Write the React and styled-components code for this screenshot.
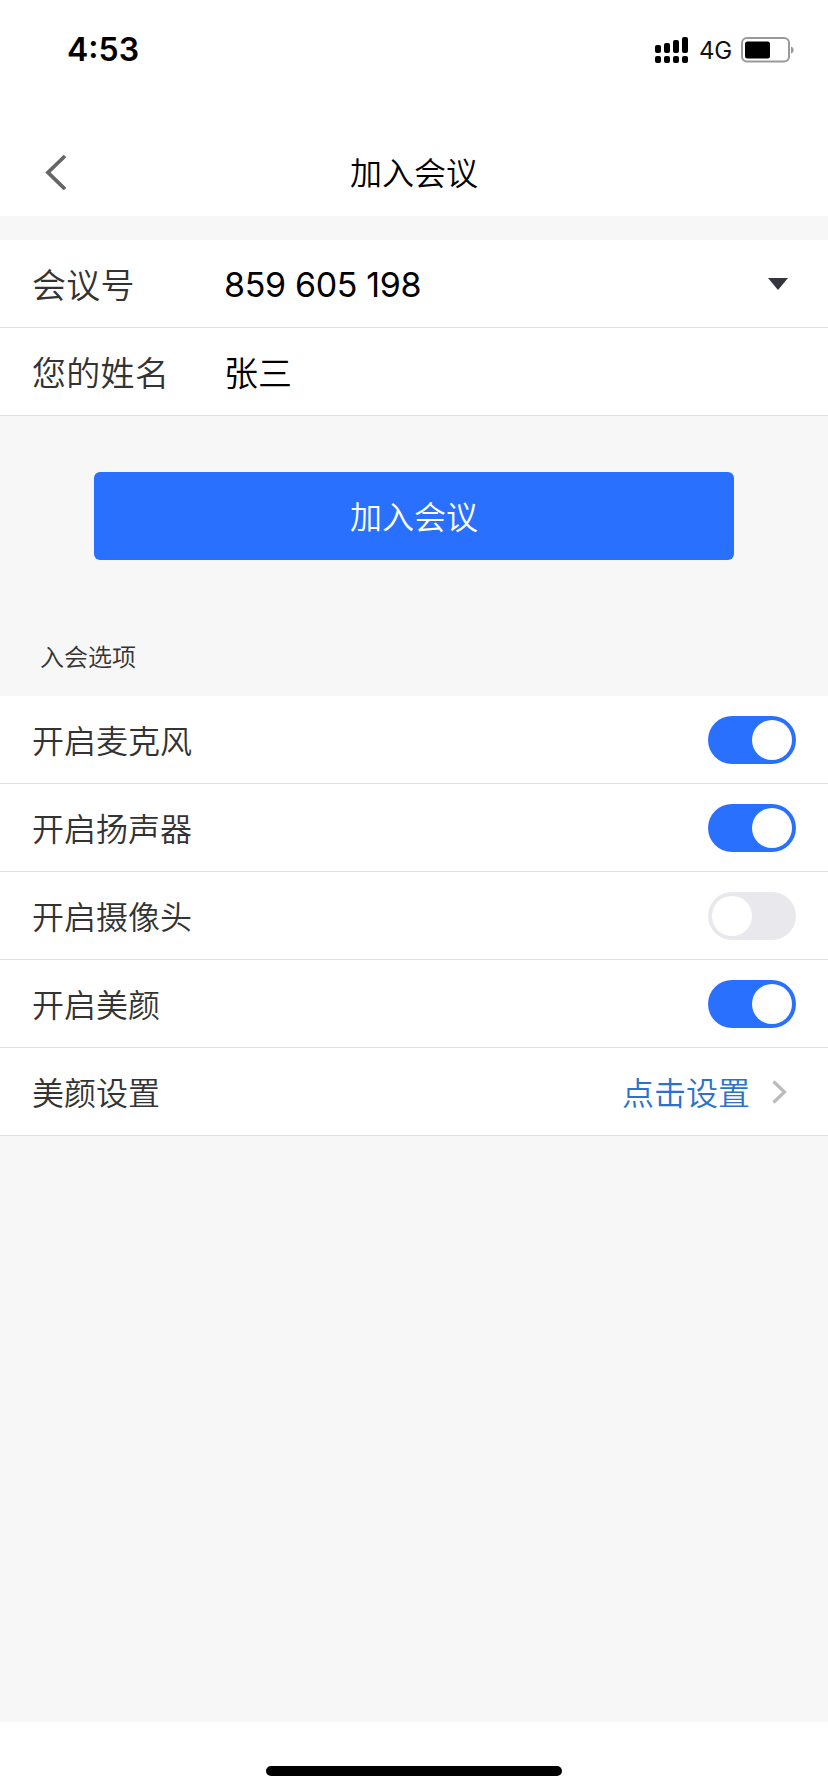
import React, { useState } from "react"
import styled, { createGlobalStyle } from "styled-components"

const GlobalStyle = createGlobalStyle`
  * {
    box-sizing: border-box;
  }
  body {
    margin: 0;
    background: #fff;
    font-family: Inter, "Noto Sans CJK SC", sans-serif;
  }
`;

const Screen = styled.div`
  width: 828px;
  height: 1792px;
  display: flex;
  flex-direction: column;
  background: #fff;
  overflow: hidden;
`;

const StatusBar = styled.header`
  height: 128px;
  padding: 30px 33px 0 67px;
  display: flex;
  align-items: flex-start;
  justify-content: space-between;
`;

const Time = styled.span`
  font-size: 32px;
  line-height: 40px;
  font-weight: 600;
  color: #000;
`;

const StatusIcons = styled.div`
  height: 40px;
  display: flex;
  align-items: center;
`;

const Network = styled.span`
  width: 43px;
  padding: 2px 0 0 10px;
  margin-right: 9px;
  font-size: 24px;
  line-height: 30px;
  letter-spacing: -0.3px;
  color: #111;
`;

const NavBar = styled.nav`
  height: 88px;
  padding: 0 44px;
  display: grid;
  grid-template-columns: 40px 1fr 40px;
  align-items: center;
`;

const BackButton = styled.button`
  height: 40px;
  padding: 0;
  border: 0;
  background: none;
  display: flex;
  align-items: center;
`;

const Title = styled.h1`
  margin: 0;
  padding-top: 3px;
  font-size: 32px;
  line-height: 48px;
  font-weight: 350;
  text-align: center;
  color: #000;
`;

const Content = styled.main`
  flex: 1;
  padding-top: 24px;
  background: #f7f7f7;
`;

const List = styled.div`
  background: #fff;
`;

const Row = styled.div`
  height: 88px;
  padding: 0 32px;
  display: flex;
  align-items: center;
  border-bottom: 1px solid #e0e0e0;
  font-size: ${props => (props.$large ? 34 : 32)}px;
  line-height: 48px;
  font-weight: 350;
  color: #333;
`;

const FieldLabel = styled.span`
  width: 192px;
  padding-top: 4px;
  letter-spacing: 0.3px;
`;

const FieldValue = styled.span`
  flex: 1;
  padding-top: ${props => (props.$numeric ? 2 : 4)}px;
  color: #000;
  font-weight: ${props => (props.$numeric ? 400 : 350)};
  letter-spacing: ${props => (props.$numeric ? "-0.35px" : "normal")};
`;

const OptionLabel = styled.span`
  flex: 1;
  padding-top: 4px;
`;

const Dropdown = styled.span`
  display: flex;
  padding-right: 8px;
`;

const JoinButton = styled.button`
  display: block;
  width: 640px;
  height: 88px;
  margin: 56px auto 0;
  padding: 3px 0 0;
  border: 0;
  border-radius: 6px;
  background: #2a70fe;
  color: #fff;
  font-family: inherit;
  font-size: 32px;
  font-weight: 350;
  line-height: 48px;
`;

const SectionTitle = styled.h2`
  height: 136px;
  margin: 0;
  padding: 80px 40px 0;
  font-size: 24px;
  line-height: 36px;
  font-weight: 350;
  color: #333;
`;

const Switch = styled.button`
  width: 88px;
  height: 48px;
  padding: 4px;
  border: 0;
  border-radius: 24px;
  display: flex;
  justify-content: ${props => (props.$on ? "flex-end" : "flex-start")};
  background: ${props => (props.$on ? "#2a70fe" : "#e9e9ed")};
`;

const Knob = styled.span`
  width: 40px;
  height: 40px;
  border-radius: 50%;
  background: #fff;
`;

const SettingLink = styled.span`
  display: flex;
  align-items: center;
  gap: 22px;
  padding-right: 9px;
  color: #2d72c9;
`;

const SettingText = styled.span`
  padding-top: 4px;
`;

const HomeArea = styled.footer`
  height: 70px;
  padding-top: 44px;
`;

const HomeIndicator = styled.div`
  width: 296px;
  height: 10px;
  margin: 0 auto;
  border-radius: 5px;
  background: #000;
`;

const SignalIcon = () => (
  <svg width="34" height="28" viewBox="0 0 34 28">
    <rect x="0" y="9" width="6" height="8" rx="2" />
    <rect x="9" y="7" width="6" height="10" rx="2" />
    <rect x="18" y="4" width="6" height="13" rx="2" />
    <rect x="27" y="1" width="6" height="16" rx="2" />
    {[0, 9, 18, 27].map(x => (
      <rect key={x} x={x} y="20" width="6" height="7" rx="2" />
    ))}
  </svg>
)

const BatteryIcon = () => (
  <svg width="54" height="26" viewBox="0 0 54 26">
    <rect x="1" y="1" width="47" height="23.5" rx="5" fill="none" stroke="#999" strokeWidth="2" />
    <rect x="4" y="4.5" width="25" height="17" rx="2.5" />
    <path d="M50 9.5c3.5 1 3.5 6 0 7z" fill="#999" />
  </svg>
)

const options = [
  { label: "开启麦克风", on: true },
  { label: "开启扬声器", on: true },
  { label: "开启摄像头", on: false },
  { label: "开启美颜", on: true },
]

const SwitchRow = ({ label, on }) => {
  const [checked, setChecked] = useState(on)
  return (
    <Row>
      <OptionLabel>{label}</OptionLabel>
      <Switch
        role="switch"
        aria-checked={checked}
        $on={checked}
        onClick={() => setChecked(!checked)}
      >
        <Knob />
      </Switch>
    </Row>
  )
}

export default () => (
  <Screen>
    <GlobalStyle />
    <StatusBar>
      <Time>4:53</Time>
      <StatusIcons>
        <SignalIcon />
        <Network>4G</Network>
        <BatteryIcon />
      </StatusIcons>
    </StatusBar>

    <NavBar>
      <BackButton>
        <svg width="24" height="36" viewBox="0 0 24 36" fill="none">
          <path d="M21 2L4 18.5 21 35" stroke="#666" strokeWidth="3.8" />
        </svg>
      </BackButton>
      <Title>加入会议</Title>
    </NavBar>

    <Content>
      <List>
        <Row $large>
          <FieldLabel>会议号</FieldLabel>
          <FieldValue $numeric>859 605 198</FieldValue>
          <Dropdown>
            <svg width="20" height="12" viewBox="0 0 20 12">
              <path d="M0 0h20L10 12z" fill="#33353f" />
            </svg>
          </Dropdown>
        </Row>
        <Row $large>
          <FieldLabel>您的姓名</FieldLabel>
          <FieldValue>张三</FieldValue>
        </Row>
      </List>

      <JoinButton>加入会议</JoinButton>

      <SectionTitle>入会选项</SectionTitle>
      <List>
        {options.map(option => (
          <SwitchRow key={option.label} {...option} />
        ))}
        <Row>
          <OptionLabel>美颜设置</OptionLabel>
          <SettingLink>
            <SettingText>点击设置</SettingText>
            <svg width="15" height="24" viewBox="0 0 15 24" fill="none">
              <path d="M1.5 1.5L12.5 12l-11 10.5" stroke="#bbb" strokeWidth="3.2" />
            </svg>
          </SettingLink>
        </Row>
      </List>
    </Content>

    <HomeArea>
      <HomeIndicator />
    </HomeArea>
  </Screen>
)
